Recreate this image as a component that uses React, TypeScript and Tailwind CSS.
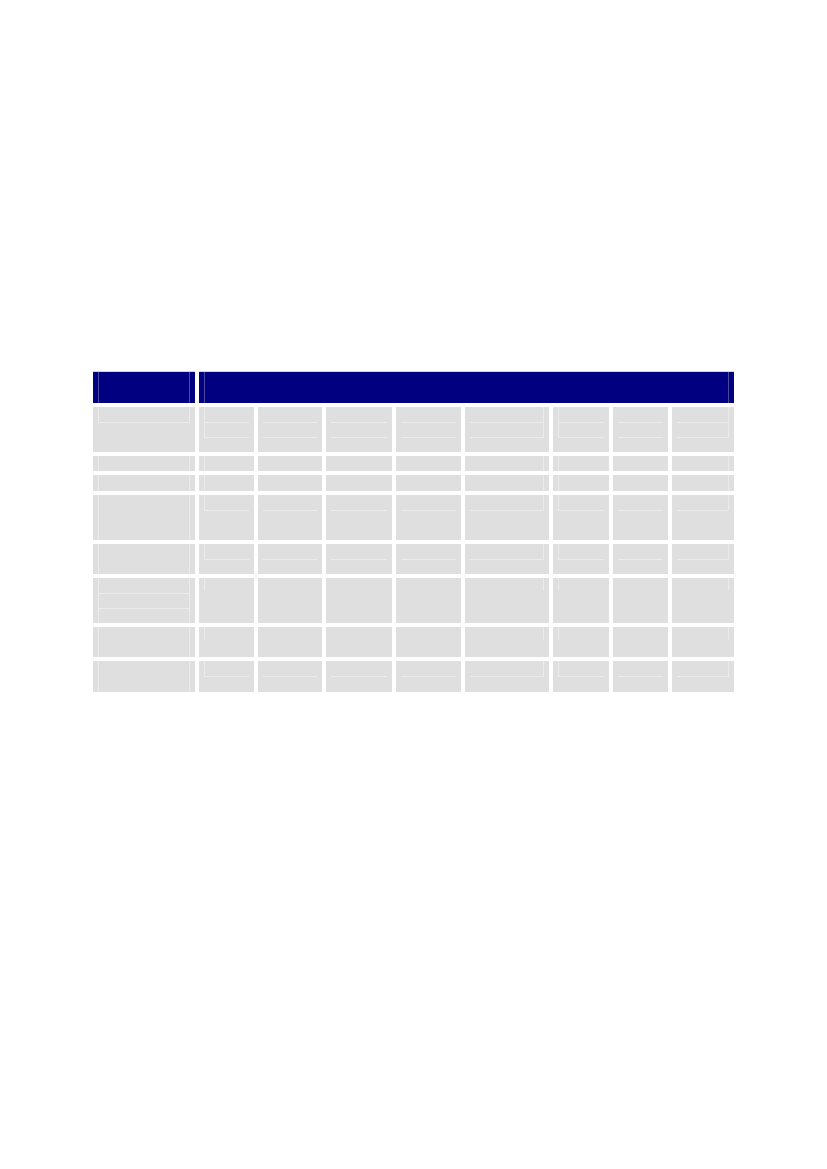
import React from "react";

type Side = "both" | "left" | "right" | "none";

const sides: Side[] = ["both", "left", "none", "none", "none", "right", "left", "none", "right"];

type RowDef = { h: string; c0: { n: number; full: boolean }; o: { n: number; full: boolean } };

const rows: RowDef[] = [
  { h: "h-[45px]", c0: { n: 1, full: false }, o: { n: 2, full: false } },
  { h: "h-[15px]", c0: { n: 0, full: true }, o: { n: 0, full: true } },
  { h: "h-[16px]", c0: { n: 0, full: true }, o: { n: 0, full: true } },
  { h: "h-[45px]", c0: { n: 0, full: true }, o: { n: 1, full: false } },
  { h: "h-[30px]", c0: { n: 0, full: true }, o: { n: 1, full: false } },
  { h: "h-[45px]", c0: { n: 2, full: true }, o: { n: 0, full: false } },
  { h: "h-[30px]", c0: { n: 0, full: true }, o: { n: 0, full: false } },
  { h: "h-[31px]", c0: { n: 0, full: true }, o: { n: 1, full: false } },
];

function sideClass(s: Side) {
  if (s === "both") return "border-l border-r";
  if (s === "left") return "border-l";
  if (s === "right") return "border-r";
  return "";
}

function Cell({ side, n, full }: { side: Side; n: number; full: boolean }) {
  const heightCls = full ? "h-full" : n === 0 ? "h-[13px]" : "";
  return (
    <div className="bg-[#dfdfdf] h-full px-[5px]">
      <div className={`${sideClass(side)} ${heightCls} border-[#ebebeb] flex flex-col`}>
        {Array.from({ length: n }).map((_, i) => (
          <div
            key={i}
            className={`${i === 0 ? "h-[16px]" : "h-[15px]"} border-b border-[#ebebeb] shrink-0`}
          />
        ))}
      </div>
    </div>
  );
}

export default function App() {
  const grid =
    "grid grid-cols-[102px_55px_64px_66px_65px_84px_56px_55px_62px] gap-x-[4px]";
  return (
    <div className="w-[827px] h-[1169px] bg-white pt-[371px] pl-[93px] font-['Liberation_Sans',sans-serif]">
      <div className="w-[641px] flex flex-col gap-[4px]">
        <div className={`${grid} h-[32px]`}>
          <div className="border-t border-[#d4d4dc] bg-[#000080] h-full px-[5px]">
            <div className="h-full border-l border-r border-[#4a4aa2]" />
          </div>
          <div className="col-span-8 border-t border-[#d4d4dc] bg-[#000080] h-full px-[5px]">
            <div className="h-full border-l border-r border-[#4a4aa2]" />
          </div>
        </div>
        {rows.map((r, ri) => (
          <div key={ri} className={`${grid} ${r.h}`}>
            {sides.map((s, ci) => {
              const cfg = ci === 0 ? r.c0 : r.o;
              return <Cell key={ci} side={s} n={cfg.n} full={cfg.full} />;
            })}
          </div>
        ))}
      </div>
    </div>
  );
}
